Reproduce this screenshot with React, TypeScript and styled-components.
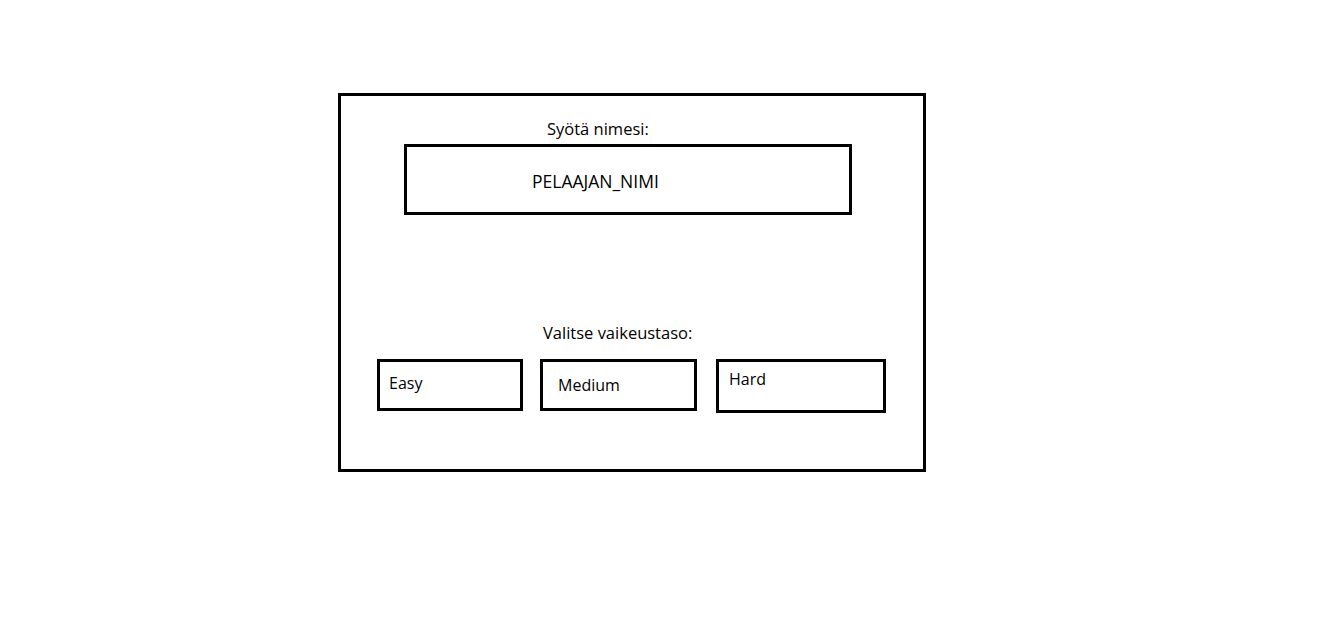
import React, { useState } from 'react';
import styled, { createGlobalStyle } from 'styled-components';

const GlobalStyle = createGlobalStyle`
  html, body {
    margin: 0;
    padding: 0;
    background: #ffffff;
  }
  body {
    font-family: 'Open Sans', 'Noto Sans', sans-serif;
    color: #000000;
  }
`;

const Page = styled.div`
  min-height: 100vh;
  padding: 93px 0 0 338px;
  box-sizing: border-box;
`;

const Frame = styled.div`
  width: 588px;
  height: 379px;
  border: 3px solid #000;
  box-sizing: border-box;
  display: flex;
  flex-direction: column;
  align-items: flex-start;
`;

const Label = styled.div<{ $left: number; $top: number }>`
  margin: ${p => p.$top}px 0 0 ${p => p.$left}px;
  font-size: 16.5px;
  line-height: 20px;
`;

const NameBox = styled.div`
  margin: 5px 0 0 63px;
  width: 448px;
  height: 71px;
  border: 3px solid #000;
  box-sizing: border-box;
  padding: 24px 0 0 125px;
  font-size: 17.5px;
  line-height: 20px;
`;

const LevelRow = styled.div`
  display: flex;
  align-items: flex-start;
  margin: 16px 0 0 36px;
`;

const LevelButton = styled.button<{
  $width: number;
  $height: number;
  $padLeft: number;
  $padTop: number;
  $gap: number;
  $selected: boolean;
}>`
  width: ${p => p.$width}px;
  height: ${p => p.$height}px;
  margin-left: ${p => p.$gap}px;
  padding: ${p => p.$padTop}px 0 0 ${p => p.$padLeft}px;
  border: 3px solid #000;
  box-sizing: border-box;
  border-radius: 0;
  background: ${p => (p.$selected ? '#f2f2f2' : '#fff')};
  color: #000;
  font-family: inherit;
  font-size: 16px;
  line-height: 20px;
  text-align: left;
  display: flex;
  align-items: flex-start;
  cursor: pointer;
`;

const levels = [
  { name: 'Easy', width: 146, height: 52, padLeft: 9, padTop: 11, gap: 0 },
  { name: 'Medium', width: 157, height: 52, padLeft: 15, padTop: 13, gap: 17 },
  { name: 'Hard', width: 170, height: 54, padLeft: 10, padTop: 7, gap: 19 },
];

const App: React.FC = () => {
  const [level, setLevel] = useState<string | null>(null);

  return (
    <Page>
      <GlobalStyle />
      <Frame>
        <Label $left={206} $top={23}>Syötä nimesi:</Label>
        <NameBox>PELAAJAN_NIMI</NameBox>

        <Label $left={202} $top={108}>Valitse vaikeustaso:</Label>
        <LevelRow>
          {levels.map(l => (
            <LevelButton
              key={l.name}
              $width={l.width}
              $height={l.height}
              $padLeft={l.padLeft}
              $padTop={l.padTop}
              $gap={l.gap}
              $selected={level === l.name}
              onClick={() => setLevel(l.name)}
            >
              {l.name}
            </LevelButton>
          ))}
        </LevelRow>
      </Frame>
    </Page>
  );
};

export default App;
